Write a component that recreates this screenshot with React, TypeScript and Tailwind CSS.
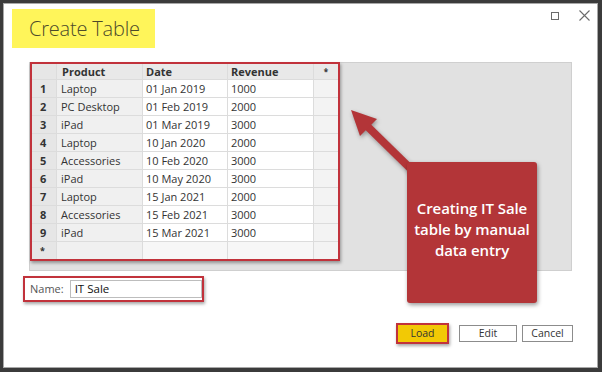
import React from "react";

const rows = [
  ["1", "Laptop", "01 Jan 2019", "1000"],
  ["2", "PC Desktop", "01 Feb 2019", "2000"],
  ["3", "iPad", "01 Mar 2019", "3000"],
  ["4", "Laptop", "10 Jan 2020", "2000"],
  ["5", "Accessories", "10 Feb 2020", "3000"],
  ["6", "iPad", "10 May 2020", "3000"],
  ["7", "Laptop", "15 Jan 2021", "2000"],
  ["8", "Accessories", "15 Feb 2021", "3000"],
  ["9", "iPad", "15 Mar 2021", "3000"],
];

const font = { fontFamily: '"Open Sans", "Noto Sans", sans-serif' };

function DataGrid() {
  return (
    <div className="-mt-px border-2 border-[#c1323b] bg-white shadow-[1px_2px_3px_rgba(0,0,0,0.35)] w-[310px]">
      <div className="grid grid-cols-[24px_85px_84px_85px_24px] auto-rows-[17px] grid-rows-[15px] gap-px bg-[#dcdcdc] text-[11px] leading-none text-[#333]">
        <div className="bg-[#e6e6e6]" />
        <div className="bg-[#e9e9e9] font-bold flex items-center pl-[5px]">Product</div>
        <div className="bg-[#e9e9e9] font-bold flex items-center pl-[3px]">Date</div>
        <div className="bg-[#e9e9e9] font-bold flex items-center pl-[3px]">Revenue</div>
        <div className="bg-[#e9e9e9] flex items-center justify-center text-[8px] font-bold">*</div>
        {rows.map((r) => (
          <React.Fragment key={r[0]}>
            <div className="bg-[#e6e6e6] font-bold flex items-center pl-[8px]">{r[0]}</div>
            <div className="bg-[#f0f0f0] flex items-center pl-[4px]">{r[1]}</div>
            <div className="bg-white flex items-center pl-[3px]">{r[2]}</div>
            <div className="bg-white flex items-center pl-[3px]">{r[3]}</div>
            <div className="bg-[#f3f3f3]" />
          </React.Fragment>
        ))}
        <div className="bg-[#e6e6e6] font-bold flex items-center pl-[8px] text-[9px]">*</div>
        <div className="bg-[#f0f0f0]" />
        <div className="bg-[#f7f7f7]" />
        <div className="bg-[#f7f7f7]" />
        <div className="bg-[#f3f3f3]" />
      </div>
    </div>
  );
}

export default function App() {
  return (
    <div className="relative w-[602px] h-[372px] bg-[#3b3b3b] pt-[3px] pl-[3px] pr-[4px] pb-[4px]" style={font}>
      <div className="flex flex-col h-full bg-white border border-[#a8a8a8]">
        <div className="flex justify-between items-start">
          <div className="ml-[8px] mt-[5px] w-[143px] h-[39px] bg-[#fff55a] flex items-center pl-[17px]">
            <span className="text-[20px] font-light text-[#4d4a2a] tracking-[-0.2px]">Create Table</span>
          </div>
          <div className="flex items-center gap-[20px] mt-[6px] mr-[7px]">
            <div className="w-[8px] h-[8px] border border-[#6b6b6b]" />
            <svg width="11" height="11" viewBox="0 0 11 11">
              <path d="M0.5 0.5 L10.5 10.5 M10.5 0.5 L0.5 10.5" stroke="#6b6b6b" strokeWidth="1.1" />
            </svg>
          </div>
        </div>

        <div className="ml-[25px] mt-[14px] w-[543px] h-[209px] bg-[#e1e1e1] border border-[#cfcfcf]">
          <DataGrid />
        </div>

        <div className="ml-[19px] mt-[5px] w-[181px] h-[26px] border-2 border-[#c1323b] bg-white shadow-[1px_2px_3px_rgba(0,0,0,0.35)] flex items-center pl-[5px] gap-[6px]">
          <span className="text-[11px] text-[#555]">Name:</span>
          <div className="w-[132px] h-[18px] border border-[#bdbdbd] flex items-center pl-[4px] text-[11.5px] text-[#111]">IT Sale</div>
        </div>

        <div className="flex justify-end items-center mt-[21px] pr-[24px] text-[10.5px] text-[#333]">
          <div className="w-[53px] h-[21px] border-2 border-[#c1323b] bg-[#f2c905] shadow-[1px_2px_3px_rgba(0,0,0,0.35)] flex items-center justify-center">
            Load
          </div>
          <div className="ml-[10px] w-[58px] h-[17px] border border-[#8c8c8c] flex items-center justify-center">Edit</div>
          <div className="ml-[5px] w-[51px] h-[17px] border border-[#8c8c8c] flex items-center justify-center">Cancel</div>
        </div>
      </div>

      <svg className="absolute left-0 top-0 pointer-events-none" width="602" height="372" style={{ filter: "drop-shadow(1px 2px 2px rgba(0,0,0,0.35))" }}>
        <line x1="366" y1="125" x2="414" y2="172" stroke="#b33538" strokeWidth="8" />
        <polygon points="351,110 377,119 360,136" fill="#b33538" />
      </svg>

      <div className="absolute left-[407px] top-[162px] w-[130px] h-[141px] rounded-[3px] bg-[#b33538] shadow-[1px_2px_4px_rgba(0,0,0,0.4)] flex items-center justify-center">
        <p className="text-center text-white font-semibold text-[15px] leading-[21px] -mt-[7px] tracking-[-0.1px]">
          Creating IT Sale
          <br />
          table by manual
          <br />
          data entry
        </p>
      </div>
    </div>
  );
}
